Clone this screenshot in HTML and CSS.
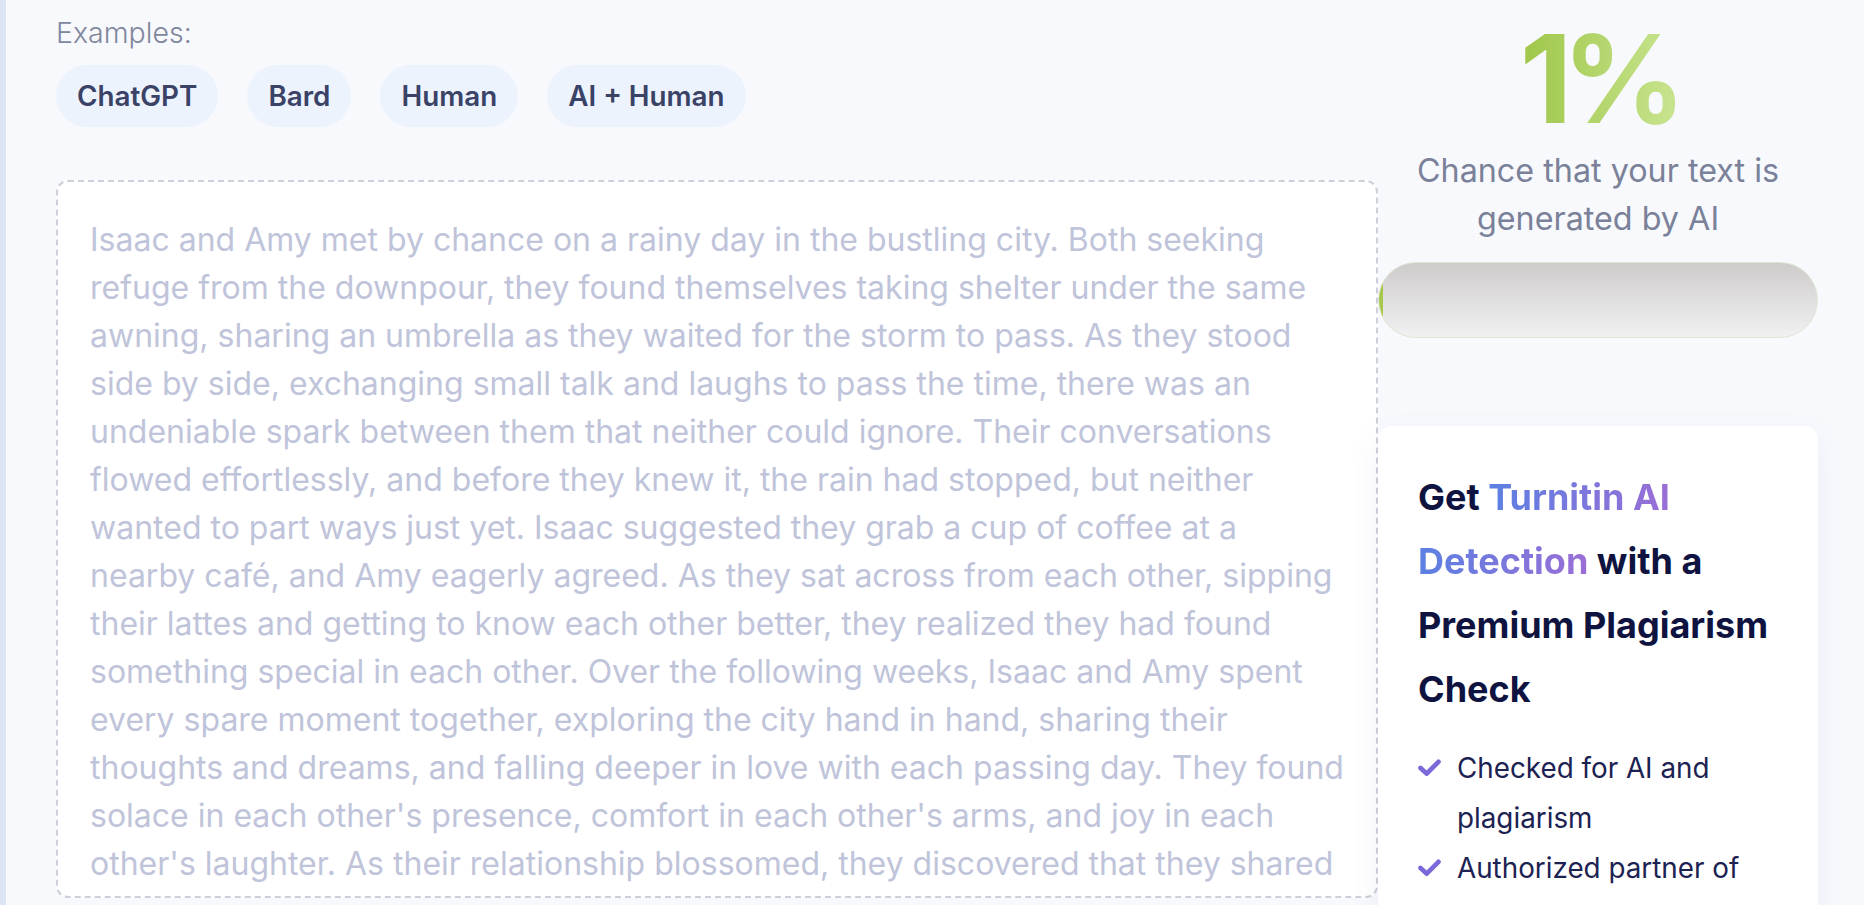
FILE: index.html
```html
<!DOCTYPE html>
<html lang="en">
<head>
  <meta charset="UTF-8">
  <meta name="viewport" content="width=device-width, initial-scale=1.0">
  <title>AI Detector</title>
  <link rel="stylesheet" href="styles.css">
</head>
<body>
  <div class="pagina">
    <div class="coloana-text">
      <div class="eticheta-exemple">Examples:</div>
      <div class="lista-exemple">
        <button class="btn-exemplu">ChatGPT</button>
        <button class="btn-exemplu">Bard</button>
        <button class="btn-exemplu">Human</button>
        <button class="btn-exemplu">AI + Human</button>
      </div>
      <div class="cutie-text">
        <p class="text-exemplu">Isaac and Amy met by chance on a rainy day in the bustling city. Both seeking refuge from the downpour, they found themselves taking shelter under the same awning, sharing an umbrella as they waited for the storm to pass. As they stood side by side, exchanging small talk and laughs to pass the time, there was an undeniable spark between them that neither could ignore. Their conversations flowed effortlessly, and before they knew it, the rain had stopped, but neither wanted to part ways just yet. Isaac suggested they grab a cup of coffee at a nearby café, and Amy eagerly agreed. As they sat across from each other, sipping their lattes and getting to know each other better, they realized they had found something special in each other. Over the following weeks, Isaac and Amy spent every spare moment together, exploring the city hand in hand, sharing their thoughts and dreams, and falling deeper in love with each passing day. They found solace in each other's presence, comfort in each other's arms, and joy in each other's laughter. As their relationship blossomed, they discovered that they shared a love for adventure, travel and good food.</p>
      </div>
    </div>

    <div class="coloana-rezultat">
      <div class="procent">1%</div>
      <div class="descriere-procent">Chance that your text is generated by AI</div>
      <div class="bara">
        <div class="bara-umplere" style="width: 1%"></div>
      </div>

      <div class="card-premium">
        <h3 class="titlu-premium">Get <span class="accent">Turnitin AI Detection</span> with a Premium Plagiarism Check</h3>
        <ul class="lista-avantaje">
          <li>
            <svg class="bifa" viewBox="0 0 24 18" width="23" height="17"><path d="M2.5 9.5 L9 15.5 L21.5 3" fill="none" stroke="currentColor" stroke-width="5" stroke-linecap="round" stroke-linejoin="round"/></svg>
            <span>Checked for AI and plagiarism</span>
          </li>
          <li>
            <svg class="bifa" viewBox="0 0 24 18" width="23" height="17"><path d="M2.5 9.5 L9 15.5 L21.5 3" fill="none" stroke="currentColor" stroke-width="5" stroke-linecap="round" stroke-linejoin="round"/></svg>
            <span>Authorized partner of Turnitin</span>
          </li>
        </ul>
      </div>
    </div>
  </div>
</body>
</html>
```

FILE: styles.css
```css
body {
  margin: 0;
  font-family: 'Inter', 'Noto Sans', sans-serif;
  background-color: #f7f9fd;
  overflow: hidden;
}
.pagina {
  display: flex;
  border-left: 6px solid #dbe5f4;
  padding-left: 50px;
  height: 905px;
  overflow: hidden;
}
.coloana-text {
  width: 1322px;
  flex-shrink: 0;
}
.eticheta-exemple {
  margin-top: 14px;
  font-size: 28.5px;
  font-weight: 300;
  color: #80879d;
  line-height: 38px;
}
.lista-exemple {
  display: flex;
  gap: 29px;
  margin-top: 13px;
}
.btn-exemplu {
  font-family: inherit;
  font-size: 27.8px;
  font-weight: 600;
  color: #3a4266;
  background-color: #ecf3fd;
  border: none;
  border-radius: 31px;
  height: 62px;
  padding: 0 21px;
  cursor: pointer;
}
.cutie-text {
  margin-top: 53px;
  height: 718px;
  background: white;
  border: 2px dashed #cdd0da;
  border-radius: 12px;
  padding: 0 29px 0 32px;
  overflow: hidden;
  box-sizing: border-box;
}
.text-exemplu {
  margin: 34px 0 0;
  font-size: 32px;
  line-height: 48px;
  color: #c0c4da;
}
.coloana-rezultat {
  width: 440px;
  flex-shrink: 0;
  display: flex;
  flex-direction: column;
  align-items: center;
}
.coloana-rezultat > * {
  flex-shrink: 0;
}
.procent {
  margin-top: 18px;
  font-size: 122px;
  font-weight: 700;
  line-height: 1;
  letter-spacing: -10px;
  background: linear-gradient(90deg, #9fc649, #c8e48f);
  -webkit-background-clip: text;
  background-clip: text;
  color: transparent;
}
.descriere-procent {
  margin-top: 7px;
  width: 400px;
  text-align: center;
  font-size: 32.3px;
  line-height: 48px;
  color: #7a8199;
}
.bara {
  margin-top: 19px;
  width: 440px;
  height: 76px;
  border-radius: 38px;
  border: 1px solid #e0e6d4;
  box-sizing: border-box;
  background: linear-gradient(180deg, #cecccb, #f1f1f1);
  overflow: hidden;
}
.bara-umplere {
  height: 100%;
  background-color: #a6c84c;
}
.card-premium {
  margin-top: 88px;
  width: 440px;
  box-sizing: border-box;
  background: white;
  border-radius: 14px;
  padding: 39px 40px;
  box-shadow: 0 10px 30px rgba(90, 100, 150, 0.08);
}
.titlu-premium {
  margin: 0;
  font-size: 36px;
  line-height: 64px;
  font-weight: 700;
  color: #0e1340;
}
.accent {
  background: linear-gradient(90deg, #5b80e2, #9a6ed6);
  -webkit-background-clip: text;
  background-clip: text;
  color: transparent;
  -webkit-box-decoration-break: clone;
  box-decoration-break: clone;
}
.lista-avantaje {
  list-style: none;
  margin: 22px 0 0;
  padding: 0;
}
.lista-avantaje li {
  display: flex;
  gap: 16px;
  font-size: 27.8px;
  line-height: 50px;
  color: #1c2252;
}
.bifa {
  flex-shrink: 0;
  margin-top: 16px;
  color: #7a69d8;
}
```
